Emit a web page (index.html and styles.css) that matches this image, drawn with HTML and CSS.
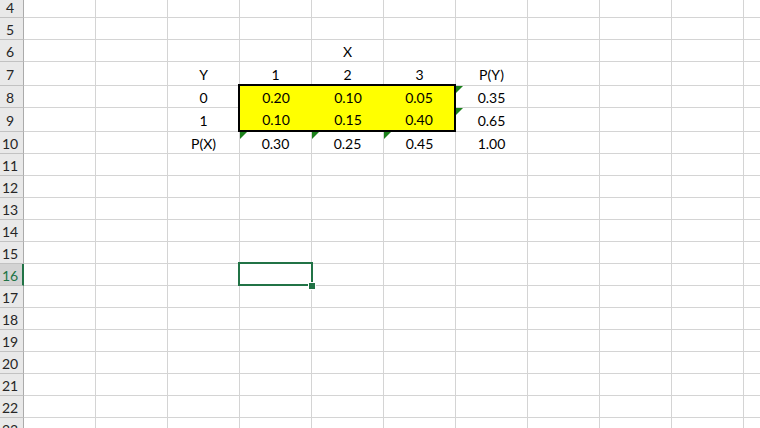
FILE: index.html
```html
<!DOCTYPE html>
<html>
<head>
<meta charset="utf-8">
<link rel="stylesheet" href="styles.css">
</head>
<body>
<div class="sheet">
  <div class="rh">4</div><div class="c"></div><div class="c"></div><div class="c"></div><div class="c"></div><div class="c"></div><div class="c"></div><div class="c"></div><div class="c"></div><div class="c"></div><div class="c"></div><div class="c"></div>
  <div class="rh">5</div><div class="c"></div><div class="c"></div><div class="c"></div><div class="c"></div><div class="c"></div><div class="c"></div><div class="c"></div><div class="c"></div><div class="c"></div><div class="c"></div><div class="c"></div>
  <div class="rh">6</div><div class="c"></div><div class="c"></div><div class="c"></div><div class="c"></div><div class="c">X</div><div class="c"></div><div class="c"></div><div class="c"></div><div class="c"></div><div class="c"></div><div class="c"></div>
  <div class="rh">7</div><div class="c"></div><div class="c"></div><div class="c">Y</div><div class="c">1</div><div class="c">2</div><div class="c">3</div><div class="c">P(Y)</div><div class="c"></div><div class="c"></div><div class="c"></div><div class="c"></div>
  <div class="block">
    <div class="v">0.20</div><div class="v">0.10</div><div class="v">0.05</div>
    <div class="v">0.10</div><div class="v">0.15</div><div class="v">0.40</div>
  </div>
  <div class="rh">8</div><div class="c"></div><div class="c"></div><div class="c">0</div><div class="c tri">0.35</div><div class="c"></div><div class="c"></div><div class="c"></div><div class="c"></div>
  <div class="rh">9</div><div class="c"></div><div class="c"></div><div class="c">1</div><div class="c tri">0.65</div><div class="c"></div><div class="c"></div><div class="c"></div><div class="c"></div>
  <div class="rh">10</div><div class="c"></div><div class="c"></div><div class="c">P(X)</div><div class="c tri">0.30</div><div class="c tri">0.25</div><div class="c tri">0.45</div><div class="c">1.00</div><div class="c"></div><div class="c"></div><div class="c"></div><div class="c"></div>
  <div class="rh">11</div><div class="c"></div><div class="c"></div><div class="c"></div><div class="c"></div><div class="c"></div><div class="c"></div><div class="c"></div><div class="c"></div><div class="c"></div><div class="c"></div><div class="c"></div>
  <div class="rh">12</div><div class="c"></div><div class="c"></div><div class="c"></div><div class="c"></div><div class="c"></div><div class="c"></div><div class="c"></div><div class="c"></div><div class="c"></div><div class="c"></div><div class="c"></div>
  <div class="rh">13</div><div class="c"></div><div class="c"></div><div class="c"></div><div class="c"></div><div class="c"></div><div class="c"></div><div class="c"></div><div class="c"></div><div class="c"></div><div class="c"></div><div class="c"></div>
  <div class="rh">14</div><div class="c"></div><div class="c"></div><div class="c"></div><div class="c"></div><div class="c"></div><div class="c"></div><div class="c"></div><div class="c"></div><div class="c"></div><div class="c"></div><div class="c"></div>
  <div class="rh">15</div><div class="c"></div><div class="c"></div><div class="c"></div><div class="c"></div><div class="c"></div><div class="c"></div><div class="c"></div><div class="c"></div><div class="c"></div><div class="c"></div><div class="c"></div>
  <div class="rh sel">16</div><div class="c"></div><div class="c"></div><div class="c"></div><div class="c"><div class="selbox"><div class="handle"></div></div></div><div class="c"></div><div class="c"></div><div class="c"></div><div class="c"></div><div class="c"></div><div class="c"></div><div class="c"></div>
  <div class="rh">17</div><div class="c"></div><div class="c"></div><div class="c"></div><div class="c"></div><div class="c"></div><div class="c"></div><div class="c"></div><div class="c"></div><div class="c"></div><div class="c"></div><div class="c"></div>
  <div class="rh">18</div><div class="c"></div><div class="c"></div><div class="c"></div><div class="c"></div><div class="c"></div><div class="c"></div><div class="c"></div><div class="c"></div><div class="c"></div><div class="c"></div><div class="c"></div>
  <div class="rh">19</div><div class="c"></div><div class="c"></div><div class="c"></div><div class="c"></div><div class="c"></div><div class="c"></div><div class="c"></div><div class="c"></div><div class="c"></div><div class="c"></div><div class="c"></div>
  <div class="rh">20</div><div class="c"></div><div class="c"></div><div class="c"></div><div class="c"></div><div class="c"></div><div class="c"></div><div class="c"></div><div class="c"></div><div class="c"></div><div class="c"></div><div class="c"></div>
  <div class="rh">21</div><div class="c"></div><div class="c"></div><div class="c"></div><div class="c"></div><div class="c"></div><div class="c"></div><div class="c"></div><div class="c"></div><div class="c"></div><div class="c"></div><div class="c"></div>
  <div class="rh">22</div><div class="c"></div><div class="c"></div><div class="c"></div><div class="c"></div><div class="c"></div><div class="c"></div><div class="c"></div><div class="c"></div><div class="c"></div><div class="c"></div><div class="c"></div>
  <div class="rh">23</div><div class="c"></div><div class="c"></div><div class="c"></div><div class="c"></div><div class="c"></div><div class="c"></div><div class="c"></div><div class="c"></div><div class="c"></div><div class="c"></div><div class="c"></div>
</div>
</body>
</html>
```

FILE: styles.css
```css
html, body {
  margin: 0;
  padding: 0;
  background: #ffffff;
  overflow: hidden;
}

body {
  font-family: Lato, "Open Sans", sans-serif;
  font-size: 14px;
  color: #000000;
}

.sheet {
  display: grid;
  grid-template-columns: 24px repeat(11, 72px);
  grid-template-rows: repeat(3, 22px) 24px 22px 24px repeat(14, 22px);
  margin-top: -4px;
  width: 760px;
  height: 432px;
  overflow: hidden;
}

.c,
.rh {
  box-sizing: border-box;
  display: flex;
  align-items: center;
  justify-content: center;
  padding-top: 1px;
  white-space: nowrap;
}

.c {
  position: relative;
  border-right: 1px solid #d4d4d4;
  border-bottom: 1px solid #d4d4d4;
}

.rh {
  background: #e9e9e9;
  color: #262626;
  border-right: 1px solid #ababab;
  border-bottom: 1px solid #c2c2c2;
  padding-right: 3px;
}

.rh.sel {
  background: #d3d3d3;
  color: #217346;
  border-right: 2px solid #217346;
  padding-right: 2px;
}

.block {
  grid-column: 5 / 8;
  grid-row: 5 / 7;
  margin: -2px 0 0 -2px;
  border: 2px solid #000000;
  background: #ffff00;
  display: grid;
  grid-template-columns: 72px 72px 70px;
  grid-template-rows: 22px 22px;
  z-index: 1;
}

.v {
  display: flex;
  align-items: center;
  justify-content: center;
  padding-top: 1px;
}

.tri::before {
  content: "";
  position: absolute;
  left: 0;
  top: 0;
  width: 0;
  height: 0;
  border-top: 7px solid #1b801b;
  border-right: 7px solid transparent;
}

.selbox {
  position: absolute;
  left: -2px;
  top: -2px;
  right: -2px;
  bottom: -1px;
  border: 2px solid #217346;
  z-index: 2;
}

.handle {
  position: absolute;
  left: 68px;
  top: 18px;
  width: 6px;
  height: 6px;
  background: #217346;
  border: 1px solid #ffffff;
}
```
